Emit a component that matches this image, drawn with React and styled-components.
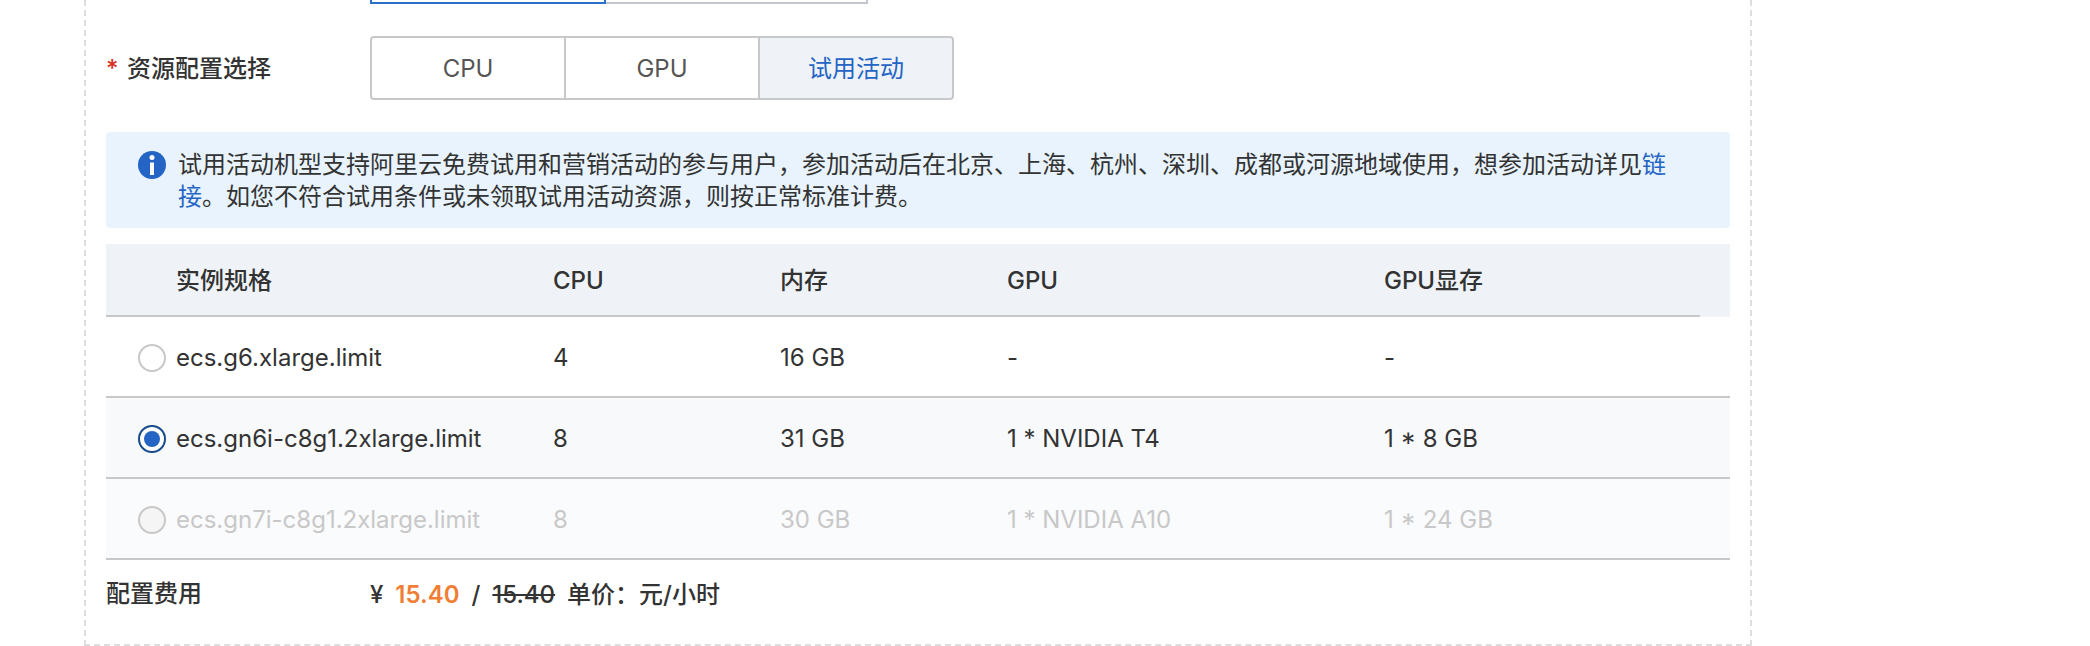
import React, { useState } from 'react';
import styled, { createGlobalStyle } from 'styled-components';

const GlobalStyle = createGlobalStyle`
    body {
        margin: 0;
        background: #fff;
        color: #333;
        font-family: Inter, "Noto Sans CJK SC", sans-serif;
        font-size: 24px;
        line-height: 32px;
    }
    button, input {
        font: inherit;
        margin: 0;
    }
`;

const Panel = styled.section`
    box-sizing: border-box;
    margin: 0 338px 0 84px;
    padding: 0 20px 32px;
    border: 2px dashed #dedede;
    border-top: none;
`;
const FormRow = styled.div`
    display: flex;
    align-items: center;
    margin-bottom: 32px;
`;
const Label = styled.span`
    flex: none;
    width: 264px;
    padding-top: 2px;
    font-weight: 500;
`;
const Required = styled.span`
    display: inline-block;
    width: 21px;
    color: #d93026;
`;
const PreviousGroup = styled.div`
    display: flex;
    margin: 0 0 32px 264px;
`;
const PreviousOption = styled.button`
    box-sizing: border-box;
    width: ${props => (props.$active ? 236 : 262)}px;
    height: 4px;
    padding: 0;
    background: #fff;
    border: 2px solid ${props => (props.$active ? '#2a6fc9' : '#c0c6cc')};
    border-top: none;
    ${props => !props.$active && 'border-left: none;'}
`;
const ButtonGroup = styled.div`
    display: flex;
`;
const GroupButton = styled.button`
    box-sizing: border-box;
    width: 196px;
    height: 64px;
    padding: 2px 0 0;
    border: 2px solid #c8c8c8;
    background: ${props => (props.$active ? '#eff3f8' : '#fff')};
    color: ${props => (props.$active ? '#2464c4' : '#555')};
    cursor: pointer;
    &:not(:first-child) {
        margin-left: -2px;
    }
    &:first-child {
        border-radius: 4px 0 0 4px;
    }
    &:last-child {
        border-radius: 0 4px 4px 0;
    }
`;
const Notice = styled.div`
    display: flex;
    gap: 12px;
    margin-bottom: 16px;
    padding: 17px 48px 15px 32px;
    border-radius: 4px;
    background: #e8f3fe;
    svg {
        flex: none;
        margin-top: 2px;
    }
    p {
        margin: 0;
    }
    a {
        color: #2464c4;
        text-decoration: none;
    }
`;
const SpecTable = styled.table`
    width: 100%;
    table-layout: fixed;
    border-collapse: separate;
    border-spacing: 0;
    text-align: left;
`;
const Col = styled.col`
    width: ${props => props.$width}px;
`;
const HeadCell = styled.th`
    box-sizing: border-box;
    height: 73px;
    padding: 2px 0 0 16px;
    border-bottom: ${props => (props.$gutter ? 'none' : '2px solid #c8c8c8')};
    background: #eff3f8;
    font-weight: 500;
`;
const Row = styled.tr`
    background: ${props => props.$background};
    color: ${props => (props.$disabled ? '#c8c8c8' : '#333')};
`;
const Cell = styled.td`
    box-sizing: border-box;
    height: 81px;
    padding: 2px 0 0 16px;
    border-bottom: 2px solid #c8c8c8;
`;
const RadioCell = styled(Cell)`
    padding-left: 32px;
`;
const Radio = styled.input`
    appearance: none;
    box-sizing: border-box;
    display: grid;
    place-content: center;
    width: 28px;
    height: 28px;
    border: 2px solid #c8c8c8;
    border-radius: 50%;
    background: #fff;
    &:checked {
        border-color: #154b8b;
    }
    &:checked::before {
        content: "";
        width: 16px;
        height: 16px;
        border-radius: 50%;
        background: #2464c4;
    }
    &:disabled {
        background: #f5f5f5;
    }
`;
const PriceRow = styled.div`
    display: flex;
    align-items: flex-start;
    margin-top: 16px;
`;
const Price = styled.div`
    display: flex;
    gap: 12px;
    padding: 3px 0 1px;
    font-weight: 500;
`;
const CurrentPrice = styled.span`
    font-weight: 600;
    color: #f07f35;
`;

const resourceTypes = ['CPU', 'GPU', '试用活动'];

const specs = [
    { name: 'ecs.g6.xlarge.limit', cpu: '4', memory: '16 GB', gpu: '-', gpuMemory: '-' },
    { name: 'ecs.gn6i-c8g1.2xlarge.limit', cpu: '8', memory: '31 GB', gpu: '1 * NVIDIA T4', gpuMemory: '1 * 8 GB' },
    { name: 'ecs.gn7i-c8g1.2xlarge.limit', cpu: '8', memory: '30 GB', gpu: '1 * NVIDIA A10', gpuMemory: '1 * 24 GB', disabled: true }
];

const InfoIcon = () => (
    <svg width="28" height="28" viewBox="0 0 28 28" aria-hidden="true">
        <circle cx="14" cy="14" r="14" fill="#2464c4" />
        <circle cx="14" cy="6.5" r="2.5" fill="#fff" />
        <rect x="12" y="11.5" width="4" height="12.5" fill="#fff" />
    </svg>
);

const rowBackground = (disabled, selected) => {
    if (disabled) return '#fafbfd';
    return selected ? '#f7f9fb' : '#fff';
};

const SpecList = () => {
    const [selected, setSelected] = useState(specs[1].name);
    return (
        <SpecTable>
            <colgroup>
                <Col $width={54} />
                <Col $width={377} />
                <Col $width={227} />
                <Col $width={227} />
                <Col $width={377} />
                <col />
                <Col $width={30} />
            </colgroup>
            <thead>
                <tr>
                    <HeadCell as="td" />
                    <HeadCell>实例规格</HeadCell>
                    <HeadCell>CPU</HeadCell>
                    <HeadCell>内存</HeadCell>
                    <HeadCell>GPU</HeadCell>
                    <HeadCell>GPU显存</HeadCell>
                    <HeadCell as="td" $gutter />
                </tr>
            </thead>
            <tbody>
                {specs.map(({ name, cpu, memory, gpu, gpuMemory, disabled }) => (
                    <Row
                        key={name}
                        $disabled={disabled}
                        $background={rowBackground(disabled, selected === name)}
                    >
                        <RadioCell>
                            <Radio
                                type="radio"
                                name="spec"
                                id={name}
                                checked={selected === name}
                                disabled={disabled}
                                onChange={() => setSelected(name)}
                            />
                        </RadioCell>
                        <Cell><label htmlFor={name}>{name}</label></Cell>
                        <Cell>{cpu}</Cell>
                        <Cell>{memory}</Cell>
                        <Cell>{gpu}</Cell>
                        <Cell colSpan={2}>{gpuMemory}</Cell>
                    </Row>
                ))}
            </tbody>
        </SpecTable>
    );
};

const App = () => {
    const [resourceType, setResourceType] = useState('试用活动');
    return (
        <>
            <GlobalStyle />
            <Panel>
                <PreviousGroup>
                    <PreviousOption type="button" $active />
                    <PreviousOption type="button" />
                </PreviousGroup>
                <FormRow>
                    <Label id="resource-type"><Required>*</Required>资源配置选择</Label>
                    <ButtonGroup role="group" aria-labelledby="resource-type">
                        {resourceTypes.map(type => (
                            <GroupButton
                                key={type}
                                type="button"
                                $active={type === resourceType}
                                onClick={() => setResourceType(type)}
                            >
                                {type}
                            </GroupButton>
                        ))}
                    </ButtonGroup>
                </FormRow>
                <Notice>
                    <InfoIcon />
                    <p>
                        试用活动机型支持阿里云免费试用和营销活动的参与用户，参加活动后在北京、上海、杭州、深圳、成都或河源地域使用，想参加活动详见<a href="#trial">链接</a>。如您不符合试用条件或未领取试用活动资源，则按正常标准计费。
                    </p>
                </Notice>
                <SpecList />
                <PriceRow>
                    <Label>配置费用</Label>
                    <Price>
                        <span>¥</span>
                        <CurrentPrice>15.40</CurrentPrice>
                        <span>/</span>
                        <s>15.40</s>
                        <span>单价：元/小时</span>
                    </Price>
                </PriceRow>
            </Panel>
        </>
    );
};

export default App;
